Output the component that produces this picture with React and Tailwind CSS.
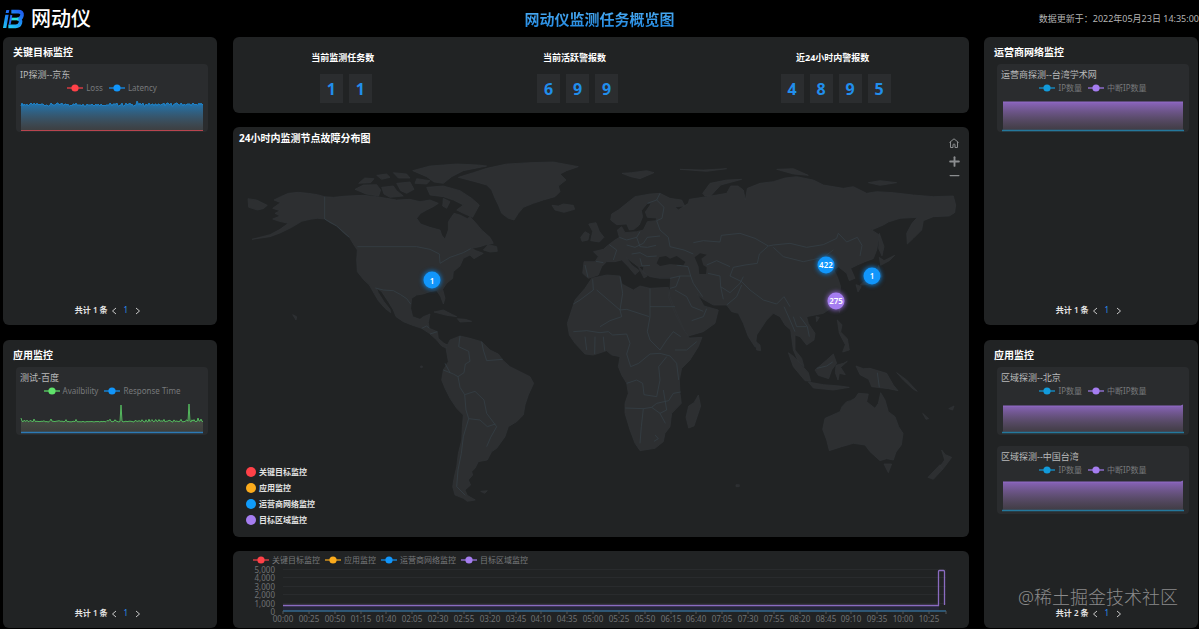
import { Minus, Plus } from "lucide-react"

const RED = "#ff4148"
const ORANGE = "#fbab1c"
const BLUE = "#1196fb"
const CYAN = "#129bdb"
const GREEN = "#5fe36b"
const PURPLE = "#a57df0"

// small repeatable noise for the sparkline shapes
const noise = (i) => {
  const v = Math.sin(i * 12.9898) * 43758.5453
  return v - Math.floor(v)
}

const latencyPoints = Array.from({ length: 183 }, (_, i) => {
  const y = i === 116 ? 7 : 12 - Math.round(noise(i) * 3)
  return `${5 + i},${y}`
}).join(" ")

const availPoints = Array.from({ length: 183 }, (_, i) => {
  let y = 25 - (noise(i + 7) > 0.72 ? noise(i) * 3 : noise(i))
  if (i === 100) y = 8
  if (i === 168) y = 7
  if (i === 0 || i === 177) y = 21
  return `${5 + i},${y.toFixed(1)}`
}).join(" ")

function LegendItem({ color, label }) {
  return (
    <li className="flex items-center gap-[3px]">
      <svg width="16" height="8" viewBox="0 0 16 8">
        <path d="M0 4h16" stroke={color} strokeWidth="1.2" />
        <circle cx="8" cy="4" r="3.6" fill={color} />
      </svg>
      <span>{label}</span>
    </li>
  )
}

function Card({ title, legend, children }) {
  return (
    <article className="h-[68px] rounded bg-[#2a2c2e] pt-[5px]">
      <h3 className="pl-1 text-[9px] leading-3 text-[#b9babb]">{title}</h3>
      <ul className="mt-px flex h-3 items-center justify-center gap-[6px] text-[8px] leading-3 text-[#77797b]">
        {legend.map((l) => (
          <LegendItem key={l.label} {...l} />
        ))}
      </ul>
      {children}
    </article>
  )
}

function Spark({ children }) {
  return (
    <svg className="block h-[38px] w-full" viewBox="0 0 192 38" preserveAspectRatio="none">
      {children}
    </svg>
  )
}

function LatencyChart() {
  return (
    <Spark>
      <defs>
        <linearGradient id="latency" x1="0" y1="0" x2="0" y2="1">
          <stop offset="0" stopColor="#1a7fc6" stopOpacity="0.95" />
          <stop offset="1" stopColor="#5a5d60" stopOpacity="0.4" />
        </linearGradient>
      </defs>
      <polygon points={`5,36 ${latencyPoints} 187,36`} fill="url(#latency)" />
      <polyline points={latencyPoints} fill="none" stroke="#1d82c9" strokeWidth="1" />
      <path d="M5 36.5h182" stroke="#b8454f" strokeWidth="1" />
    </Spark>
  )
}

function AvailChart() {
  return (
    <Spark>
      <defs>
        <linearGradient id="avail" x1="0" y1="0" x2="0" y2="1">
          <stop offset="0" stopColor="#6a7a60" stopOpacity="0.6" />
          <stop offset="1" stopColor="#4a4a45" stopOpacity="0.6" />
        </linearGradient>
      </defs>
      <polygon points={`5,35 ${availPoints} 187,35`} fill="url(#avail)" />
      <polyline points={availPoints} fill="none" stroke="#53b85d" strokeWidth="1" />
      <path d="M5 35.5h182" stroke="#2c79b5" strokeWidth="1.4" />
    </Spark>
  )
}

function IpChart({ id, top, base, bump }) {
  return (
    <Spark>
      <defs>
        <linearGradient id={id} x1="0" y1="0" x2="0" y2="1">
          <stop offset="0" stopColor="#8a64bd" />
          <stop offset="1" stopColor="#6b5b70" stopOpacity="0.35" />
        </linearGradient>
      </defs>
      <path d={`M6 ${base}V${top}H184l2-${bump}V${base}Z`} fill={`url(#${id})`} />
      <path d={`M6 ${top}H184l2-${bump}`} fill="none" stroke="#8f6ac4" strokeWidth="1" />
      <path d={`M5 ${base + 0.5}H187`} stroke="#24789c" strokeWidth="1.4" />
    </Spark>
  )
}

function Pager({ total }) {
  return (
    <nav className="mt-auto flex h-4 items-center justify-center pr-1 text-[8px] leading-4">
      <span className="font-semibold text-[#e6e6e6]">共计 {total} 条</span>
      <button type="button" aria-label="上一页" className="ml-[3px] pt-0.5 text-[#c8c8c8]">
        <svg width="6" height="8" viewBox="0 0 6 8" fill="none" stroke="currentColor">
          <path d="M5 1 1.500 4 5 7" />
        </svg>
      </button>
      <button type="button" className="mx-[7px] text-[#2b8cf0]">1</button>
      <button type="button" aria-label="下一页" className="pt-0.5 text-[#c8c8c8]">
        <svg width="6" height="8" viewBox="0 0 6 8" fill="none" stroke="currentColor">
          <path d="M1 1 4.500 4 1 7" />
        </svg>
      </button>
    </nav>
  )
}

function SidePanel({ title, total, children }) {
  return (
    <section className="flex flex-1 flex-col rounded-md bg-[#212324] pt-2 pb-[7px]">
      <h2 className="pl-2.5 text-[10px] leading-[15px] font-bold text-white">{title}</h2>
      <div className="mt-1 mr-[9px] ml-[13px] flex flex-col gap-[11px]">{children}</div>
      <Pager total={total} />
    </section>
  )
}

function Stat({ label, value }) {
  return (
    <div className="flex flex-col items-center">
      <p className="text-[9px] leading-3 font-bold text-white">{label}</p>
      <div className="mt-[10px] flex">
        {value.split("").map((n, i) => (
          <span key={i} className="ml-[6px] flex h-[29px] w-[23px] items-center justify-center bg-[#2b2d2f] text-base font-bold text-[#218eec]">
            {n}
          </span>
        ))}
      </div>
    </div>
  )
}

const americas = [
  // mainland, Alaska to Panama
  "M284 140 262 134 235 130 205 127 175 130 152 140 132 150 152 158 140 166 128 175 150 182 135 190 150 198 128 207 148 214 175 220 150 238 120 254 66 268 120 260 150 249 185 232 215 214 240 208 262 205 284 207 300 218 320 228 340 248 358 262 372 285 382 300 380 330 382 365 400 388 418 405 432 430 445 452 465 475 482 488 480 478 462 455 445 428 440 415 455 425 475 455 490 480 498 500 520 515 545 525 575 535 598 550 620 570 635 588 648 594 655 586 642 580 625 565 622 545 598 535 595 518 600 492 580 500 570 508 548 500 542 475 545 445 560 435 580 432 600 425 620 422 632 440 640 462 645 445 638 418 650 400 668 385 670 365 690 348 700 325 720 315 732 326 760 310 738 302 725 295 750 290 765 285 790 280 780 262 755 240 740 222 720 200 712 206 690 195 672 190 655 215 655 240 645 268 635 255 630 240 600 232 572 222 560 205 572 190 590 180 610 170 625 160 600 150 570 155 540 148 500 150 470 145 440 140 400 136 350 138 310 142Z",
  "M760 300 775 284 800 290 802 304 780 306Z",
  // arctic islands
  "M375 118 400 105 440 104 452 120 446 138 408 132Z M386 100 404 84 432 86 422 98Z M440 76 470 72 480 82 455 88Z M455 112 490 108 500 122 520 138 480 142 462 132Z M490 68 530 72 540 84 505 84Z M500 100 540 96 552 118 530 130 512 122Z M555 100 590 102 600 92 560 86Z",
  "M548 62 600 48 680 42 745 45 770 48 700 62 665 80 640 100 612 96 590 80Z",
  "M590 112 640 108 690 122 725 145 748 165 728 202 700 190 680 180 700 165 670 150 640 140 600 135Z M640 145 660 155 650 175 638 168Z",
  // Greenland, Iceland
  "M685 82 730 68 770 55 830 42 900 38 970 36 1045 50 1010 62 990 72 1008 90 985 108 990 125 975 140 940 150 910 160 880 172 865 190 852 210 835 205 815 190 805 165 795 145 785 120 770 105 735 95Z",
  "M966 166 985 168 1000 162 1030 166 1034 178 1002 187 975 180Z",
  "M54 146 80 150 112 166 100 176 82 180 56 172Z",
  "M612 486 640 480 668 494 680 500 650 496Z M682 506 706 508 725 514 690 516Z M188 494 200 500 198 510Z M572 648h5v5h-5Z",
  // South America
  "M648 594 660 570 690 558 720 565 755 575 780 600 805 612 820 632 840 650 870 665 900 680 911 700 895 735 885 765 880 795 860 815 835 830 825 860 800 895 785 905 772 930 745 935 735 955 725 965 728 975 715 990 722 1005 705 1020 712 1036 736 1050 712 1054 700 1045 675 1035 668 1010 672 985 680 950 685 910 695 870 697 830 700 795 680 775 660 745 645 715 635 690 640 660 655 635Z M752 1024 772 1022 764 1030Z",
]

const americaBorders = [
  "M284 140V207L320 228 358 262",
  "M382 290H560L600 298 628 312 630 340 660 322 700 308 722 296",
  "M436 414 460 420 490 422 512 434 530 446 542 462",
  "M575 535 590 528 598 535M600 552 622 545",
  "M690 558 686 590 716 604 720 634 706 642 702 668 684 680 690 712 704 734 735 724 762 750 770 790 800 830 782 862 770 890",
  "M755 575 760 600 770 632 818 628M640 660 670 672 684 680M704 734 708 780 716 806 700 860 694 910 684 960 680 1010 706 1036",
  "M716 806 750 810 772 830 796 822M645 640 660 668",
]

const oldWorld = [
  // Europe and Asia
  "M68 370 72 335 105 335 115 320 100 305 130 298 145 285 165 270 178 262 172 240 185 230 195 248 230 245 250 240 262 215 288 212 290 204 262 202 256 186 274 160 262 160 244 182 248 200 238 225 222 238 208 240 200 222 170 224 152 210 155 192 175 180 200 160 225 140 270 132 300 130 330 145 365 150 374 168 345 170 355 180 385 160 388 148 440 140 500 130 512 108 534 108 550 120 556 150 562 115 600 100 640 95 675 84 710 80 760 90 790 105 850 115 880 110 920 130 950 125 1000 128 1060 135 1120 140 1180 138 1187 165 1184 188 1168 198 1120 200 1090 212 1085 240 1060 265 1042 282 1040 250 1056 220 1072 202 1020 205 985 216 970 225 935 240 958 255 950 300 940 326 915 335 892 345 872 355 885 385 868 392 860 370 835 350 822 360 832 380 842 410 838 440 820 470 790 490 765 495 740 500 745 520 765 550 762 570 740 585 720 560 705 555 705 600 725 625 732 650 715 635 700 600 692 540 675 525 660 500 640 490 620 510 600 540 590 555 586 592 565 560 550 520 535 490 515 485 500 465 460 465 425 445 412 432 432 468 475 480 465 520 430 545 385 558 368 535 345 490 325 440 330 415 332 385 300 385 270 380 248 366 252 348 236 350 262 378 252 384 235 350 215 335 198 322 215 345 238 362 225 374 205 350 185 330 165 335 140 335 125 350 115 375 85 385Z",
  // Britain and Ireland
  "M92 272 118 276 132 262 118 244 108 218 86 222 98 244Z M62 262 75 245 88 252 84 270 66 274Z",
  // arctic islands
  "M428 130 450 100 500 90 545 88 482 105 452 138 435 138Z M186 70 215 68 260 62 282 68 240 86 212 80Z M360 58 430 60 500 56 440 64Z M650 58 700 56 745 76 700 72Z M925 98 960 92 1010 98 960 106Z",
  // Africa
  "M95 385 140 375 180 378 186 402 220 420 240 408 270 415 325 412 330 440 350 490 375 545 388 564 426 562 415 590 390 630 365 655 358 690 360 730 364 760 335 790 330 830 315 850 310 875 285 895 240 902 225 880 210 840 195 790 195 760 205 730 200 700 185 675 175 650 180 620 155 615 140 602 100 615 75 612 45 580 28 555 22 520 35 480 45 450 75 415Z",
  "M415 735 422 768 402 828 386 834 378 802 386 768 402 758Z",
  // islands off Asia
  "M588 575 600 585 602 602 590 600Z M768 500 778 502 770 515Z M835 466 842 474 838 488Z",
  "M958 250 972 290 966 318 956 296Z M958 322 972 332 1004 316 988 332 962 346Z M956 346 966 380 930 402 900 406 912 394 944 380Z M888 404 904 410 894 426Z",
  "M832 510 846 524 842 546 862 566 868 600 848 606 856 584 838 550Z",
  "M685 608 702 620 745 668 752 694 735 692 700 650Z M745 696 790 704 840 708 868 712 820 720 760 714Z M765 660 800 630 820 612 830 640 815 660 806 686 775 676Z M828 646 850 640 862 634 842 652 856 674 838 670 834 690 826 668Z",
  "M888 648 910 656 930 655 980 670 1000 705 1014 722 985 716 935 710 926 688 900 674Z M1010 668 1040 690 1072 724 1060 718 1030 690Z",
  // Australia and New Zealand
  "M795 805 840 785 846 770 860 755 872 752 885 745 895 730 925 732 920 755 945 775 955 760 962 728 975 750 985 785 1005 800 1016 830 1029 850 1024 885 1008 906 1000 930 980 926 960 932 930 905 915 885 880 880 845 890 808 902 800 870 788 838Z M972 942 995 942 985 968Z",
  "M1145 900 1156 914 1175 922 1162 940 1148 958 1138 952 1154 930Z M1140 944 1148 958 1120 988 1104 982Z M1088 790 1106 806 1098 808Z M1166 776 1182 768 1178 780Z M528 1004h10v6h-10Z",
]

const oldWorldBorders = [
  "M262 160 290 150 300 130M290 150 312 172 306 205 290 212 300 240 325 262 330 290 372 300 400 312",
  "M400 278 430 272 480 276 484 256 540 250 585 265 625 288 640 285 690 280 740 292 790 284 830 265 835 250 860 276 892 262 906 286 900 318",
  "M625 288 598 312 592 340 555 345 520 352 510 378 545 395 570 420 610 450 650 462 672 440 690 470",
  "M640 292 670 320 730 335 790 322 820 300",
  "M440 345 470 332 510 350M444 370 480 378 482 410 490 448M482 410 510 428 540 400 550 380M500 465 530 440 545 405",
  "M148 284 170 300 160 330M178 262 200 270 230 262 240 245M200 285 225 292 250 280 262 262 300 258M215 312 240 308 262 320 290 318M240 325 246 348 270 346M230 262 240 290 262 292 288 286",
  "M75 345 84 382M130 338 108 334M330 385 360 378 392 378 400 400 428 440M392 378 384 350 350 345M360 378 348 410 330 415M345 420 380 440 395 470 430 484M395 512 430 500 440 476",
  "M98 388 100 420 60 450 40 462M110 420 180 480 185 500 150 512 120 530M180 380 188 430 180 480 200 478 268 500M270 415V500L262 545 270 570M270 470H345M40 545 80 542 120 548 145 545 158 555 200 552 210 580 200 612",
  "M75 560 80 600M105 560 104 612M130 560 134 602M200 612 212 650 236 640 270 612 300 610 330 618M270 570 300 600 320 570 340 545 362 560M330 618 350 640 356 690M345 600 380 600 410 575",
  "M200 700 230 690 248 700 252 734 290 740M290 740 300 690 296 650 320 620M196 774 250 776 275 772M250 776 244 830 240 880M275 772 300 790 316 820M275 772 290 760 326 752 340 730 362 726M310 720 320 780 300 790M285 855 295 866 282 874",
  "M700 500 710 530 740 530M672 470 690 510 705 545M720 500 742 530 748 560M770 655 800 648 818 636M952 668 958 712",
]

const pins = [
  { x: 27.04, y: 33.7, value: 1, className: "bg-[#1196fb] shadow-[0_0_4px_1px_#1170bb]" },
  { x: 80.57, y: 29.7, value: 422, className: "bg-[#1196fb] shadow-[0_0_4px_1px_#1170bb]" },
  { x: 86.82, y: 32.5, value: 1, className: "bg-[#1196fb] shadow-[0_0_4px_1px_#1170bb]" },
  { x: 81.93, y: 39, value: 275, className: "bg-[#a57df0] shadow-[0_0_4px_1px_#7d5cb5]" },
]

function WorldMap() {
  return (
    <div className="relative flex-1">
      <svg className="absolute inset-0 h-full w-full" viewBox="0 0 2208 1161" preserveAspectRatio="none">
        <g transform="translate(-9 0)">
          <path d={americas.join("")} fill="#2d2f31" stroke="#313437" strokeWidth="2" />
          <path d={americaBorders.join("")} fill="none" stroke="#37424a" strokeWidth="2" />
        </g>
        <g transform="translate(981 0)">
          <path d={oldWorld.join("")} fill="#2d2f31" stroke="#313437" strokeWidth="2" />
          <path d={oldWorldBorders.join("")} fill="none" stroke="#37424a" strokeWidth="2" />
          {/* Black Sea, Caspian */}
          <path d="M290 340 298 322 318 318 330 326 350 318 376 336 370 346 330 342 300 348ZM404 322 420 310 440 314 424 326 430 346 440 352 438 372 418 372 416 350Z" fill="#212324" />
        </g>
      </svg>
      {pins.map((p, i) => (
        <span
          key={i}
          className={`absolute flex h-[17px] w-[17px] -translate-x-1/2 -translate-y-1/2 items-center justify-center rounded-full text-[8px] leading-none font-semibold text-white ${p.className}`}
          style={{ left: `${p.x}%`, top: `${p.y}%` }}
        >
          {p.value}
        </span>
      ))}
      <ul className="absolute bottom-[9px] left-[13px] text-[8px] leading-4 font-semibold text-[#e2e2e2]">
        <li className="flex items-center gap-[3px]"><i className="h-2.5 w-2.5 rounded-full bg-[#ff4148]" />关键目标监控</li>
        <li className="flex items-center gap-[3px]"><i className="h-2.5 w-2.5 rounded-full bg-[#fbab1c]" />应用监控</li>
        <li className="flex items-center gap-[3px]"><i className="h-2.5 w-2.5 rounded-full bg-[#109cfb]" />运营商网络监控</li>
        <li className="flex items-center gap-[3px]"><i className="h-2.5 w-2.5 rounded-full bg-[#a57df0]" />目标区域监控</li>
      </ul>
    </div>
  )
}

const yTicks = ["5,000", "4,000", "3,000", "2,000", "1,000", "0"]

const xTicks = Array.from({ length: 26 }, (_, i) => {
  const m = i * 25
  return `${String(Math.floor(m / 60)).padStart(2, "0")}:${String(m % 60).padStart(2, "0")}`
})

const tickX = (i) => 50 + Math.round(i * 25.84)

function Trend() {
  return (
    <section className="h-[77px] rounded-md bg-[#212324] pt-[3px]">
      <ul className="flex h-3 items-center gap-[5px] pl-5 text-[8px] leading-3 text-[#77797b]">
        <LegendItem color={RED} label="关键目标监控" />
        <LegendItem color={ORANGE} label="应用监控" />
        <LegendItem color={BLUE} label="运营商网络监控" />
        <LegendItem color={PURPLE} label="目标区域监控" />
      </ul>
      <svg className="block w-full overflow-visible" viewBox="0 0 736 61">
        {yTicks.map((t, i) => (
          <g key={t}>
            <text x="42" y={7 + Math.round(i * 8.4)} textAnchor="end" fontSize="8" fill="#707274">{t}</text>
            {i < 5 && <path d={`M50 ${3 + Math.round(i * 8.4)}.5H713`} stroke="#292b2d" />}
          </g>
        ))}
        <path d="M50 40h656v5H50Z" fill="#252638" />
        <path d="M50 39.500H705.500V5.500Q705.500 4.500 706.500 4.500H710.500Q711.500 4.500 711.500 5.500V39" fill="none" stroke="#8a6bc0" strokeWidth="1.3" />
        <path d="M50 45H713" stroke="#33688c" strokeWidth="1.6" />
        {xTicks.map((t, i) => (
          <g key={t}>
            <path d={`M${tickX(i)} 45v3`} stroke="#55585b" strokeWidth="1" />
            <text x={tickX(i)} y="56" textAnchor="middle" fontSize="8" fill="#707274">{t}</text>
          </g>
        ))}
        <path d="M713 45v3" stroke="#55585b" strokeWidth="1" />
      </svg>
    </section>
  )
}

function Logo() {
  return (
    <svg width="22" height="20" viewBox="0 0 66 60" fill="none" strokeLinejoin="round">
      <defs>
        <linearGradient id="logo" x1="0.9" y1="0" x2="0.1" y2="1">
          <stop offset="0" stopColor="#1f5ff0" />
          <stop offset="0.5" stopColor="#1d93f5" />
          <stop offset="1" stopColor="#22c8f5" />
        </linearGradient>
      </defs>
      <path d="M10 3h9l-2 9H8ZM7 17h10L10 57H0Z" fill="url(#logo)" />
      <path d="M25 8H46Q59 8 57 19 55 29 46 30 55 32 52 42 49 52 38 52H16" stroke="url(#logo)" strokeWidth="11" />
      <path d="M24 30H46" stroke="#2be0d8" strokeWidth="8" />
      <path d="M25 18 20 47" stroke="#2a6df5" strokeWidth="6" />
    </svg>
  )
}

const ipLegend = [
  { color: CYAN, label: "IP数量" },
  { color: PURPLE, label: "中断IP数量" },
]

export default function App() {
  return (
    <div className="relative flex min-h-screen flex-col bg-black pb-px font-['Noto_Sans','Noto_Sans_CJK_SC',sans-serif] text-white">
      <header className="grid h-[37px] grid-cols-3 items-center">
        <div className="flex items-center gap-[6px] pl-[3px]">
          <Logo />
          <span className="text-xl leading-6 font-medium">网动仪</span>
        </div>
        <h1 className="bg-gradient-to-b from-[#4fb0f5] to-[#1e86e0] bg-clip-text text-center text-[15px] leading-5 font-semibold text-transparent">
          网动仪监测任务概览图
        </h1>
        <p className="text-right text-[9px] leading-4 text-[#b5b5b5]">数据更新于：2022年05月23日 14:35:00</p>
      </header>

      <main className="grid flex-1 grid-cols-[214fr_737fr_214fr] gap-x-[15px] pr-px pl-[3px]">
        <div className="flex min-w-0 flex-col gap-[15px]">
          <SidePanel title="关键目标监控" total={1}>
            <Card title="IP探测--京东" legend={[{ color: RED, label: "Loss" }, { color: BLUE, label: "Latency" }]}>
              <LatencyChart />
            </Card>
          </SidePanel>
          <SidePanel title="应用监控" total={1}>
            <Card title="测试-百度" legend={[{ color: GREEN, label: "Availbility" }, { color: BLUE, label: "Response Time" }]}>
              <AvailChart />
            </Card>
          </SidePanel>
        </div>

        <div className="flex min-w-0 flex-col gap-[14px] pl-px">
          <section className="flex h-[76px] justify-around rounded-md bg-[#212324] pt-[15px]">
            <Stat label="当前监测任务数" value="11" />
            <Stat label="当前活跃警报数" value="699" />
            <Stat label="近24小时内警报数" value="4895" />
          </section>

          <section className="relative flex flex-1 flex-col rounded-md bg-[#212324]">
            <h2 className="h-[23px] pt-1 pl-[6px] text-[10px] leading-[15px] font-bold text-white">24小时内监测节点故障分布图</h2>
            <WorldMap />
            <div className="absolute top-[10px] right-[7px] flex flex-col items-center text-[#8b8d8f]">
              <button type="button" aria-label="复位" className="flex h-3 w-3 items-center justify-center">
                <svg width="10" height="10" viewBox="0 0 10 10" fill="none" stroke="currentColor">
                  <path d="M.5 4.500 5 .8l4.500 3.700M1.500 4v5.500H4V7a1 1 0 0 1 2 0v2.500h2.500V4" />
                </svg>
              </button>
              <button type="button" aria-label="放大" className="mt-1 flex h-4 w-4 items-center justify-center">
                <Plus size={15} strokeWidth={3} />
              </button>
              <button type="button" aria-label="缩小" className="flex h-3 w-4 items-center justify-center">
                <Minus size={15} strokeWidth={2} />
              </button>
            </div>
          </section>

          <Trend />
        </div>

        <div className="flex min-w-0 flex-col gap-[15px]">
          <SidePanel title="运营商网络监控" total={1}>
            <Card title="运营商探测--台湾学术网" legend={ipLegend}>
              <IpChart id="isp" top={8} base={36} bump={0} />
            </Card>
          </SidePanel>
          <SidePanel title="应用监控" total={2}>
            <Card title="区域探测--北京" legend={ipLegend}>
              <IpChart id="beijing" top={9} base={35} bump={1} />
            </Card>
            <Card title="区域探测--中国台湾" legend={ipLegend}>
              <IpChart id="taiwan" top={6} base={34} bump={1} />
            </Card>
          </SidePanel>
        </div>
      </main>

      <p className="pointer-events-none absolute right-[21px] bottom-5 text-lg leading-6 font-light text-[#8a8a8a]">
        @稀土掘金技术社区
      </p>
    </div>
  )
}
